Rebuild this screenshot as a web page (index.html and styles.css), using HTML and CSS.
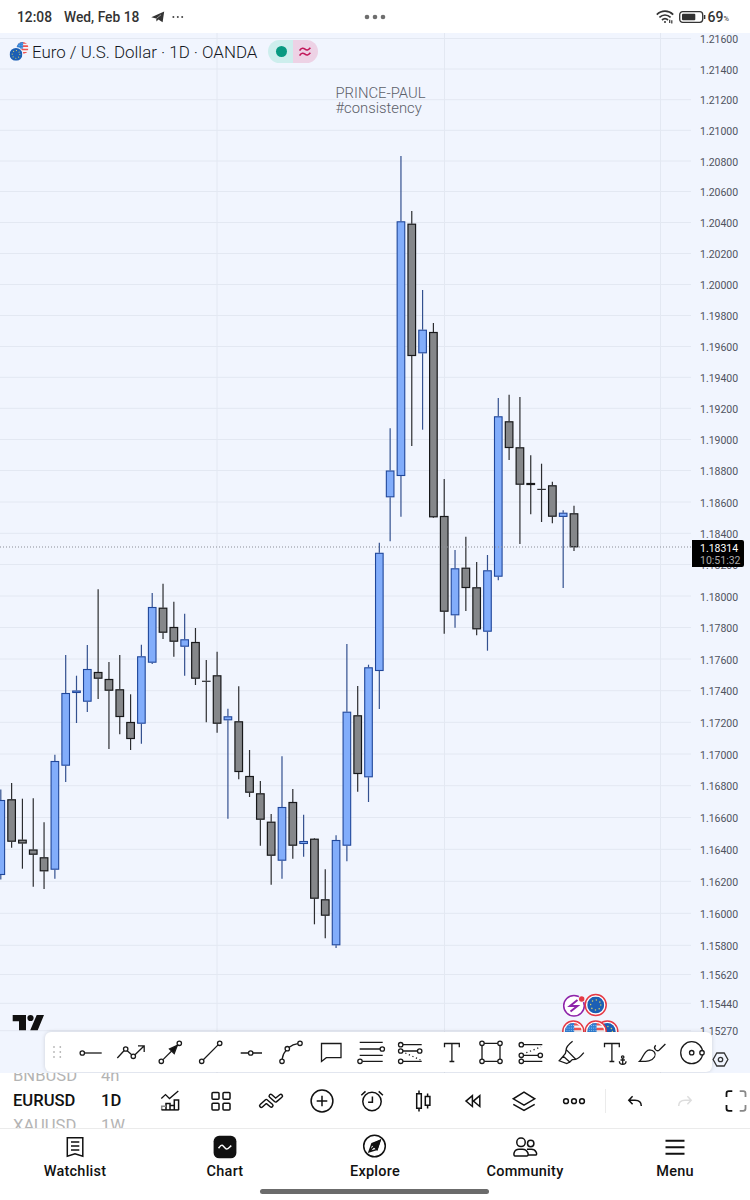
FILE: index.html
```html
<!DOCTYPE html>
<html lang="en">
<head>
    <meta charset="UTF-8">
    <meta name="viewport" content="width=device-width, initial-scale=1.0">
    <title>EURUSD Chart</title>
    <link rel="stylesheet" href="styles.css">
</head>
<body>
    <svg class="defs" width="0" height="0">
        <symbol id="flag-eu" viewBox="0 0 20 20">
            <circle cx="10" cy="10" r="10" fill="#1c5fb4"/>
            <circle cx="10" cy="10" r="6" fill="none" stroke="#d8d06a" stroke-width="1.7" stroke-linecap="round" stroke-dasharray="0.1 4.61"/>
        </symbol>
        <symbol id="flag-us" viewBox="0 0 20 20">
            <clipPath id="round"><circle cx="10" cy="10" r="10"/></clipPath>
            <g clip-path="url(#round)">
                <rect width="20" height="20" fill="#f4f4f8"/>
                <path d="M0 1.5h20M0 7h20M0 12.5h20M0 18h20" stroke="#ef5350" stroke-width="2.8"/>
                <rect width="11" height="11" fill="#2f7fd6"/>
                <path d="M2 3h9M2 6h9M2 9h9" stroke="#b8dcf5" stroke-width="1" stroke-dasharray="1 1.6"/>
            </g>
        </symbol>
    </svg>

    <header class="status-bar">
        <div class="status-left">
            <span>12:08</span>
            <span class="date">Wed, Feb 18</span>
            <svg class="plane" width="14" height="12" viewBox="0 0 14 12"><path d="M.3 6.2 13.2.4 11.6 11.3 7.4 8.6 5.5 10.6 5.2 7.6z" fill="#333"/><path d="M5.4 7.5 10 3.8" stroke="#fff" stroke-width=".5"/></svg>
            <svg width="12" height="4" viewBox="0 0 12 4" fill="#444"><circle cx="1.4" cy="2" r="1"/><circle cx="5.8" cy="2" r="1"/><circle cx="10.2" cy="2" r="1"/></svg>
        </div>
        <svg class="dots" width="22" height="6" viewBox="0 0 22 6" fill="#6e6e6e"><circle cx="3" cy="3" r="2.3"/><circle cx="11" cy="3" r="2.3"/><circle cx="19" cy="3" r="2.3"/></svg>
        <div class="status-right">
            <svg width="18" height="14" viewBox="0 0 18 14" fill="none" stroke="#333" stroke-width="1.7">
                <path d="M.8 4.6C5.500 0 12.500 0 17.200 4.600M3.400 7.400C6.800 4.200 11.200 4.200 14.600 7.400M6 10C7.800 8.400 10.200 8.400 12 10"/>
                <circle cx="9" cy="12" r="1" fill="#333" stroke="none"/>
                <path d="M13.700 9.800v3.200M15.800 10.200v3.200" stroke-width="1.200"/>
            </svg>
            <svg class="battery" width="27" height="12" viewBox="0 0 27 12">
                <rect x=".7" y=".7" width="23" height="10.600" rx="3" fill="none" stroke="#333" stroke-width="1.300"/>
                <rect x="3" y="2.800" width="13.300" height="6.400" rx="1" fill="#333"/>
                <path d="M25.600 4v4" stroke="#333" stroke-width="1.500"/>
            </svg>
            <span class="level">69</span><span class="percent">%</span>
        </div>
    </header>

    <main class="chart">
        <svg id="chart" width="750" height="1040" viewBox="0 33 750 1040"></svg>

        <div class="legend">
            <svg width="20" height="21" viewBox="0 0 20 21">
                <use href="#flag-us" x="7.500" y="1" width="12" height="12"/>
                <circle cx="7" cy="13.300" r="7.300" fill="#f1f5fe"/>
                <use href="#flag-eu" x=".6" y="7" width="12.800" height="12.800"/>
            </svg>
            <span class="title">Euro / U.S. Dollar · 1D · OANDA</span>
            <div class="chip">
                <span class="open"></span>
                <span class="approx"><svg width="12" height="10" viewBox="0 0 12 10" fill="none" stroke="#c2185b" stroke-width="1.600"><path d="M.6 3.600C2.500.4 4.500 1 6 2.200S9.500 3.400 11.400.8M.6 8.600C2.500 5.400 4.500 6 6 7.200S9.500 8.400 11.400 5.800"/></svg></span>
            </div>
        </div>

        <div class="price-tag">
            <span>1.18314</span>
            <span class="countdown">10:51:32</span>
        </div>

        <div class="draw-tools">
            <svg class="grip" width="10" height="14" viewBox="0 0 10 14"><path d="M2 2v11M8.300 2v11" stroke="#b5b5b5" stroke-width="1.800" stroke-linecap="round" stroke-dasharray="0.1 4.900"/></svg>
            <svg class="tool" viewBox="0 0 40 40"><path d="M14.700 21h17"/><circle cx="12.300" cy="21" r="2.200"/></svg>
            <svg class="tool" viewBox="0 0 40 40"><path d="M7.300 26 14 18.800M17.200 18.700 21.700 22.700M25 22.700 34 14M28 13.800h6.200v6.200"/><circle cx="15.700" cy="17" r="2.200"/><circle cx="23.300" cy="24.300" r="2.200"/></svg>
            <svg class="tool" viewBox="0 0 40 40"><path d="M13 27.600 27.700 13"/><path class="solid" d="M27.300 13.300 19.500 17 24.200 21.600z"/><circle cx="11.300" cy="29.300" r="2.200"/><circle cx="29.300" cy="11.300" r="2.200"/></svg>
            <svg class="tool" viewBox="0 0 40 40"><path d="M13.300 27.700 28.100 12.900"/><circle cx="11.700" cy="29.300" r="2.200"/><circle cx="29.700" cy="11.300" r="2.200"/></svg>
            <svg class="tool" viewBox="0 0 40 40"><path d="M10.700 21h7.700M23 21h9"/><circle cx="20.700" cy="21" r="2.200"/></svg>
            <svg class="tool" viewBox="0 0 40 40"><path d="M12.200 27C12.600 23.500 14 20.500 16 18.600M19.200 15.300C21.500 13.300 24.500 12 27.800 11.600"/><circle cx="12" cy="29.300" r="2.200"/><circle cx="17.300" cy="16.700" r="2.200"/><circle cx="30" cy="11.300" r="2.200"/></svg>
            <svg class="tool" viewBox="0 0 40 40"><path d="M11.500 11.500H31v14.200H16.300L11.500 29.500z"/></svg>
            <svg class="tool" viewBox="0 0 40 40"><path d="M9.700 10.300h23M9.700 17h20.400M9.700 23.300h23M12.400 29.300h20.300"/><circle cx="32.300" cy="17" r="2.200"/><circle cx="10" cy="29.300" r="2.200"/></svg>
            <svg class="tool" viewBox="0 0 40 40"><path d="M13 12.700h18.700M13 19h14.500M13 29.300h18.700"/><path d="M15.300 21 30.500 28" stroke-dasharray="1.200 2.700"/><circle cx="10.700" cy="12.700" r="2.200"/><circle cx="10.700" cy="19" r="2.200"/><circle cx="29.700" cy="19" r="2.200"/><circle cx="10.700" cy="29.300" r="2.200"/></svg>
            <svg class="tool" viewBox="0 0 40 40"><path d="M14.500 15.300v-3.800h14.800v3.800M21.900 11.500v18M19.500 29.500h4.800"/></svg>
            <svg class="tool" viewBox="0 0 40 40"><path d="M12 13.500v13.600M30 13.500v13.600M14.200 11.300h13.600M14.200 29.300h13.600"/><circle cx="12" cy="11.300" r="2.200"/><circle cx="30" cy="11.300" r="2.200"/><circle cx="12" cy="29.300" r="2.200"/><circle cx="30" cy="29.300" r="2.200"/></svg>
            <svg class="tool" viewBox="0 0 40 40"><path d="M13.500 12.700h18.800M13.500 23.300h14.600M13.500 29.300h18.800"/><path d="M16.300 20.700 31 14.800" stroke-dasharray="1.200 2.700"/><circle cx="11.300" cy="12.700" r="2.200"/><circle cx="11.300" cy="23.300" r="2.200"/><circle cx="30.300" cy="23.300" r="2.200"/><circle cx="11.300" cy="29.300" r="2.200"/></svg>
            <svg class="tool" viewBox="0 0 40 40"><path d="M22.600 9.300C18.500 12.500 16.200 14.800 16.200 17.600L15.400 21.500 13.200 24.200 19.800 30 22.300 27.600 25.700 27.300C28.500 26.500 31 24 33.800 20.600M16.200 17.600 25.700 27.300M13.200 24.200 9.200 28.800 16.800 31.600 19.800 30"/></svg>
            <svg class="tool" viewBox="0 0 40 40"><path d="M14.500 15.300v-3.800h14.800v3.800M21.900 11.500v18M19.500 29.500h4.800"/><path d="M32.700 26.300v6.200M30.500 28h4.400M29.400 29.300C29.400 33.500 36 33.500 36 29.300"/><circle cx="32.700" cy="25" r="1.200"/></svg>
            <svg class="tool" viewBox="0 0 40 40"><path d="M9.600 29.300C13 26.500 13.800 18.200 19.500 17.800 24 17.800 26.500 21.500 24.500 25 22 29.500 16 29.300 9.600 29.300zM35.400 12 29.300 18C27 20 22.500 16.500 25.700 13.200"/></svg>
            <svg class="tool" viewBox="0 0 40 40"><circle cx="21.700" cy="20.700" r="11"/><circle cx="21.700" cy="20.700" r="2.200"/><circle class="fill-white" cx="32" cy="20.700" r="2.200"/></svg>
        </div>

        <svg class="axis-settings" width="17" height="15" viewBox="0 0 17 15"><path d="M4.800 1h7.400l3.700 6.500-3.700 6.500H4.800L1.100 7.500z"/><circle cx="8.500" cy="7.500" r="2.200"/></svg>
    </main>

    <section class="toolbar">
        <div class="wheel symbols">
            <span>BNBUSD</span>
            <span class="current">EURUSD</span>
            <span>XAUUSD</span>
        </div>
        <div class="wheel intervals">
            <span>4h</span>
            <span class="current">1D</span>
            <span>1W</span>
        </div>
        <div class="actions">
            <button><svg viewBox="0 0 28 28"><path d="M5.300 11.500 9.500 7.600 13.500 11.500 22.300 4" stroke-width="1.300"/><path d="M10 23V16.500h4V23M14 18.500h4.300M18.300 23v-10h4.300v10"/><path d="M10 19.300H5.700V23" stroke="#888"/><path d="M5.500 22.900h17.300"/></svg></button>
            <button><svg viewBox="0 0 28 28"><rect x="5" y="5.400" width="7" height="6.800" rx="1"/><rect x="16" y="5.400" width="7" height="6.800" rx="1"/><rect x="5" y="16.200" width="7" height="6.800" rx="1"/><rect x="16" y="16.200" width="7" height="6.800" rx="1"/></svg></button>
            <button><svg viewBox="0 0 28 28"><path class="outer" d="M4.300 18.700 9.300 14.300 14.300 18.500M13.800 9 18.600 13.300 23.800 9"/><path class="inner" d="M4.300 18.700 9.300 14.300 14.300 18.500M13.800 9 18.600 13.300 23.800 9"/></svg></button>
            <button><svg viewBox="0 0 28 28"><circle cx="14" cy="14" r="10.900"/><path d="M14 8.700v10.600M8.700 14h10.600"/></svg></button>
            <button><svg viewBox="0 0 28 28"><circle cx="14" cy="14.500" r="9.200"/><path d="M3.300 8.300 7.500 4.400M20.700 4.400 24.900 8.300M14.400 9.500v5.700h-4.300"/></svg></button>
            <button><svg viewBox="0 0 28 28"><path d="M7.700 6.700h4.600v14.600H7.700zM10 3.500v3.200M10 21.300v3.200M16.300 9.600h4.600v8.600h-4.600zM18.600 6.500v3.100M18.600 18.200v3.200"/></svg></button>
            <button><svg viewBox="0 0 28 28"><path d="M13.400 8.700v10.800L7 14.100zM20.800 8.700v10.800l-6.400-5.400z"/></svg></button>
            <button><svg viewBox="0 0 28 28"><path d="M14 5.200 24.700 11.800 14 18.200 3.300 11.800zM3.300 17.300 14 23.500 24.700 17.300"/></svg></button>
            <button><svg viewBox="0 0 28 28"><circle cx="6" cy="14.200" r="2.400"/><circle cx="14" cy="14.200" r="2.400"/><circle cx="22" cy="14.200" r="2.400"/></svg></button>
            <span class="divider"></span>
            <button><svg viewBox="0 0 28 28"><path d="M11.600 9.200 7.800 13.200 11.600 17.200M8 13.200H14C18 13.200 20.300 15.500 20.300 19"/></svg></button>
            <button class="disabled"><svg viewBox="0 0 28 28"><path d="M16.400 9.200 20.200 13.200 16.400 17.200M20 13.200H14C10 13.200 7.700 15.500 7.700 19"/></svg></button>
            <button class="fullscreen"><svg viewBox="0 0 28 28"><path d="M4.500 10V6.500Q4.500 4.200 6.800 4.200H10.300M4.500 18V21.500Q4.500 23.800 6.800 23.800H10.300"/><path d="M17.700 4.200H21.200Q23.500 4.200 23.500 6.500V10M17.700 23.800H21.200Q23.500 23.800 23.500 21.500V18" stroke="#888"/></svg></button>
        </div>
    </section>

    <nav class="bottom-nav">
        <a><svg viewBox="0 0 28 28"><path d="M6.300 4.700h15.500v18.600L14 20.800 6.300 23.300zM10 9h8.300M10 13h8.300M10 17h8.300"/></svg>Watchlist</a>
        <a><svg viewBox="0 0 28 28"><rect x="2.600" y="2.800" width="22.800" height="22.500" rx="5.500" fill="#111" stroke="none"/><path d="M7.500 15.300C9.500 12.500 10.300 11.500 11.500 12.300L14.800 15.800C16.200 17 17 15.700 20.300 12.600" stroke="#fff"/></svg>Chart</a>
        <a><svg viewBox="0 0 28 28"><circle cx="13.500" cy="13" r="10.800"/><path d="M19 7.500 16 16.500 8 18.800 11 10.500zM8 18.800 13.500 13"/><path d="M19 7.500 16 16.500 11 11.500z" fill="#111"/></svg>Explore</a>
        <a><svg viewBox="0 0 28 28"><rect x="5.800" y="5" width="8.400" height="8.600" rx="4"/><circle cx="19.700" cy="10.500" r="3.200"/><path d="M4.200 23C1.800 23 2.500 16.300 8 16.300H11.500C17 16.300 18.500 23 16 23zM16 16.300H20.500C25 16.300 27 22 24.600 22H17.500" stroke-width="1.500"/></svg>Community</a>
        <a><svg viewBox="0 0 28 28"><path d="M4.500 7.800h19M4.500 14.200h19M4.500 20.700h19" stroke-width="1.900"/></svg>Menu</a>
        <span class="home-bar"></span>
    </nav>

    <script src="chart.js"></script>
</body>
</html>
```

FILE: styles.css
```css
* {
    box-sizing: border-box;
}
body {
    margin: 0;
    width: 750px;
    height: 1200px;
    display: flex;
    flex-direction: column;
    overflow: hidden;
    background-color: #fff;
    color: #111;
    font-family: Roboto, "Liberation Sans", sans-serif;
}
svg {
    display: block;
    flex: none;
}
.defs {
    position: absolute;
}

/* status bar */
.status-bar {
    height: 33px;
    flex: none;
    display: grid;
    grid-template-columns: 1fr auto 1fr;
    align-items: center;
    padding: 0 21px 0 17px;
    color: #333;
    font-size: 13.8px;
    font-weight: 500;
}
.status-left, .status-right {
    display: flex;
    align-items: center;
}
.status-left .date {
    margin-left: 12px;
}
.plane {
    margin: 0 7px 0 12px;
}
.dots {
    margin-left: 4px;
}
.status-right {
    justify-content: flex-end;
}
.battery {
    margin: 0 2px 0 5px;
}
.level {
    font-size: 14px;
}
.percent {
    font-size: 7.5px;
    font-weight: 400;
    padding-top: 3px;
}

/* chart */
.chart {
    position: relative;
    height: 1040px;
    flex: none;
    overflow: hidden;
    background-color: #f1f5fe;
}
.grid {
    stroke: #e3e8f2;
}
.axis {
    font-size: 10.5px;
    fill: #50535e;
}
.note {
    font-size: 14.8px;
    font-weight: 300;
    fill: #5c6069;
}
.last-price {
    stroke: #8a8d96;
    stroke-dasharray: 1 2;
}
.up line {
    stroke: #33508f;
    stroke-width: 1.2;
}
.up rect {
    fill: #82adfb;
    stroke: #20479a;
    stroke-width: 1.1;
}
.down line {
    stroke: #2c2d30;
    stroke-width: 1.2;
}
.down rect {
    fill: #85878a;
    stroke: #17181a;
    stroke-width: 1.2;
}
.legend {
    position: absolute;
    left: 9px;
    top: 7px;
    height: 23px;
    display: flex;
    align-items: center;
}
.title {
    width: 227px;
    margin: 0 9px 0 3px;
    font-size: 16.9px;
    font-weight: 300;
    white-space: nowrap;
    color: #131722;
}
.chip {
    display: flex;
    width: 50px;
    height: 23px;
    border-radius: 12px;
    overflow: hidden;
}
.chip span {
    flex: 1;
    display: flex;
    align-items: center;
    justify-content: center;
}
.open {
    background-color: #cdeeed;
}
.open::before {
    content: "";
    width: 11px;
    height: 11px;
    margin-left: 2px;
    border-radius: 50%;
    background-color: #089981;
}
.approx {
    background-color: #edd2e5;
}
.approx svg {
    margin-right: 2px;
}
.price-tag {
    position: absolute;
    left: 692px;
    top: 507px;
    width: 52px;
    height: 27px;
    padding: 3px 0 0 8px;
    border-radius: 0 2px 2px 0;
    background-color: #000;
    color: #fff;
    font-size: 10.5px;
    line-height: 12px;
    display: flex;
    flex-direction: column;
}
.countdown {
    color: #aaa;
}

/* drawing tools over the chart */
.draw-tools {
    position: absolute;
    left: 45px;
    top: 999px;
    width: 667px;
    height: 40px;
    display: flex;
    align-items: center;
    padding-left: 7px;
    border-radius: 6px;
    background-color: #fff;
    box-shadow: 0 0 4px rgba(0, 0, 0, 0.15);
}
.grip {
    margin-right: 8px;
}
.tool {
    width: 40px;
    height: 40px;
    fill: none;
    stroke: #1a1a1a;
    stroke-width: 1.3;
}
.solid {
    fill: #111;
}
.fill-white {
    fill: #fff;
}
.axis-settings {
    position: absolute;
    left: 712px;
    top: 1019px;
    fill: none;
    stroke: #333;
    stroke-width: 1.3;
}

/* symbol and interval pickers */
.toolbar {
    height: 56px;
    flex: none;
    display: flex;
    overflow: hidden;
    border-bottom: 1px solid #ebebeb;
}
.wheel {
    height: 55px;
    flex: none;
    overflow: hidden;
    display: flex;
    flex-direction: column;
    justify-content: center;
    font-size: 16.6px;
    line-height: 25px;
    color: #b4b4b4;
}
.wheel span {
    flex: none;
}
.wheel .current {
    color: #111;
    font-weight: 500;
}
.symbols {
    width: 88px;
    padding-left: 13px;
}
.intervals {
    width: 57px;
    padding-left: 13px;
}
.actions {
    flex: none;
    display: flex;
    align-items: center;
}
.actions button {
    width: 50.5px;
    height: 55px;
    flex: none;
    padding: 0;
    border: none;
    background: none;
    display: flex;
    align-items: center;
    justify-content: center;
}
.actions svg, .bottom-nav svg {
    width: 28px;
    height: 28px;
    fill: none;
    stroke: #111;
    stroke-width: 1.5;
}
.actions .outer {
    stroke-width: 4.8;
    stroke-linecap: round;
    stroke-linejoin: round;
}
.actions .inner {
    stroke: #fff;
    stroke-width: 1.9;
    stroke-linecap: round;
}
.actions .disabled svg {
    stroke: #ddd;
}
.actions .fullscreen svg {
    stroke-width: 1.8;
}
.divider {
    width: 1px;
    height: 24px;
    margin: 0 4px 0 5px;
    background-color: #ebebeb;
}

/* bottom navigation */
.bottom-nav {
    position: relative;
    height: 71px;
    flex: none;
    display: grid;
    grid-template-columns: repeat(5, 1fr);
}
.bottom-nav a {
    display: flex;
    flex-direction: column;
    align-items: center;
    padding-top: 4px;
    font-size: 14.5px;
    font-weight: 500;
    line-height: 22px;
    letter-spacing: 0.25px;
}
.home-bar {
    position: absolute;
    left: 260px;
    bottom: 6px;
    width: 229px;
    height: 5px;
    border-radius: 3px;
    background-color: #6b6b6b;
}
```

FILE: chart.js
```js
const chart = document.getElementById('chart');

// label, y
const prices = [
    ['1.21600', 38.5], ['1.21400', 69], ['1.21200', 99.7], ['1.21000', 130.3], ['1.20800', 161],
    ['1.20600', 191.5], ['1.20400', 222.5], ['1.20200', 253.5], ['1.20000', 284.5], ['1.19800', 315.5],
    ['1.19600', 346.5], ['1.19400', 377.3], ['1.19200', 408.3], ['1.19000', 439.5], ['1.18800', 470.5],
    ['1.18600', 502], ['1.18400', 533.3], ['1.18200', 564.5], ['1.18000', 596], ['1.17800', 627.5],
    ['1.17600', 659], ['1.17400', 690.7], ['1.17200', 722.3], ['1.17000', 754], ['1.16800', 785.7],
    ['1.16600', 817.5], ['1.16400', 849.3], ['1.16200', 881.3], ['1.16000', 913.3], ['1.15800', 945.3],
    ['1.15620', 974.5], ['1.15440', 1003.3], ['1.15270', 1030.7]
];

// direction, high, body top, body bottom, low
const candles = [
    ['up', 789.5, 800, 875, 879.5], ['down', 783, 799.3, 841.7, 847.7], ['down', 798.7, 839.7, 843.5, 868.7],
    ['down', 798.3, 849.5, 854.7, 886.7], ['down', 822.3, 857.3, 871.3, 889], ['up', 754.7, 761, 869.7, 878.7],
    ['up', 655, 693, 765.7, 782], ['up', 675.7, 690.5, 693, 723], ['up', 645, 669, 701.7, 712],
    ['down', 589.3, 672, 678.7, 699], ['down', 662, 679, 690.7, 749], ['down', 655, 689.3, 717, 734.3],
    ['down', 694.3, 722, 739, 750], ['up', 644.7, 656.3, 723.7, 743.7], ['up', 593, 607, 662.7, 664],
    ['down', 583.7, 607.7, 632.7, 639], ['down', 601.7, 627, 641.7, 656.7], ['up', 613.7, 639.3, 646.7, 675.7],
    ['down', 628, 642, 678.7, 685], ['down', 660, 680.8, 681.8, 722.3], ['down', 651.7, 675.3, 723.7, 732.7],
    ['up', 708.7, 716.3, 720.3, 818.7], ['down', 686.3, 721.3, 772, 779.3], ['down', 750, 776, 792.7, 797],
    ['down', 781, 793.3, 819.7, 845.7], ['down', 814, 821.7, 855.7, 884.7], ['up', 756.3, 807, 860.7, 878.7],
    ['down', 789, 802, 845.7, 858.7], ['up', 814.7, 841, 844, 856.7], ['down', 838, 838.7, 898.7, 924.3],
    ['down', 869.3, 899.3, 915.7, 938.3], ['up', 835.3, 840, 945.3, 948], ['up', 644, 711.7, 845.7, 861.3],
    ['down', 686, 715.3, 774, 791.7], ['up', 664.7, 667.3, 777.3, 802], ['up', 542.7, 552.8, 671, 709],
    ['up', 428.3, 470.5, 497.3, 541.3], ['up', 156, 221.3, 476, 516.7], ['down', 211, 223.7, 356, 446],
    ['up', 290, 329.7, 353.3, 429.7], ['down', 323, 332, 517.3, 518], ['down', 479, 516, 611.7, 633.7],
    ['up', 550, 568.3, 615.3, 627.7], ['down', 536.7, 567.7, 588, 611], ['down', 562, 587.3, 629.3, 635.3],
    ['up', 555, 570.3, 631.7, 650.7], ['up', 398, 416.3, 576.7, 580.3], ['down', 394.7, 421.3, 448, 460],
    ['down', 397, 447.3, 484.7, 544], ['down', 455.3, 483, 485, 514.3], ['down', 463.7, 488.9, 489.9, 522],
    ['down', 481.7, 485.3, 516.7, 523.3], ['up', 510.3, 512.7, 516.9, 588], ['down', 505.7, 513.3, 547.3, 551]
];

let out = '';

[217, 444.5, 660.5].forEach(x => {
    out += `<line class="grid" x1="${x}" y1="33" x2="${x}" y2="1073"/>`;
});
prices.forEach(([label, y]) => {
    out += `<line class="grid" x1="0" y1="${y}" x2="691" y2="${y}"/>`;
    out += `<text class="axis" x="700" y="${y + 4.5}">${label}</text>`;
});

out += '<text class="note" x="335.500" y="98">PRINCE-PAUL</text>';
out += '<text class="note" x="335.500" y="113">#consistency</text>';

candles.forEach(([dir, high, top, bottom, low], i) => {
    const x = 0.8 + i * 10.815;
    const height = bottom - top;
    out += `<g class="${dir}">
        <line x1="${x}" y1="${high}" x2="${x}" y2="${top}"/>
        <line x1="${x}" y1="${bottom}" x2="${x}" y2="${low}"/>`;
    if (height <= 1) {
        out += `<line x1="${x - 4.3}" y1="${top + 0.5}" x2="${x + 4.3}" y2="${top + 0.5}"/>`;
    } else {
        out += `<rect x="${x - 3.8}" y="${top + 0.5}" width="7.600" height="${height - 1}"/>`;
    }
    out += '</g>';
});

out += '<line class="last-price" x1="0" y1="547" x2="692" y2="547"/>';

// economic events
out += `<circle cx="574" cy="1005.700" r="10.300" fill="#fff" stroke="#8e24aa" stroke-width="1.500"/>
    <path d="M577.500 1000 570 1006h7.500l-7 5.500" fill="none" stroke="#8e24aa" stroke-width="2"/>
    <circle cx="581.700" cy="999" r="3.600" fill="#f1f5fe"/>
    <circle cx="581.700" cy="999" r="2.700" fill="#e53945"/>`;
[[595.7, 1005, 'eu'], [607.3, 1031.5, 'eu'], [573.3, 1031.5, 'us'], [595.7, 1031.5, 'us']].forEach(([x, y, flag]) => {
    out += `<circle cx="${x}" cy="${y}" r="10.500" fill="#fff" stroke="#e53945" stroke-width="1.500"/>
        <use href="#flag-${flag}" x="${x - 8.5}" y="${y - 8.5}" width="17" height="17"/>`;
});

// logo
out += `<g fill="#111">
    <path d="M12.700 1015H26v15.300h-7v-9h-6.300zM36.700 1015H44l-6.300 15.300h-7.500z"/>
    <circle cx="30.500" cy="1018" r="3.100"/>
</g>`;

chart.innerHTML = out;
```
